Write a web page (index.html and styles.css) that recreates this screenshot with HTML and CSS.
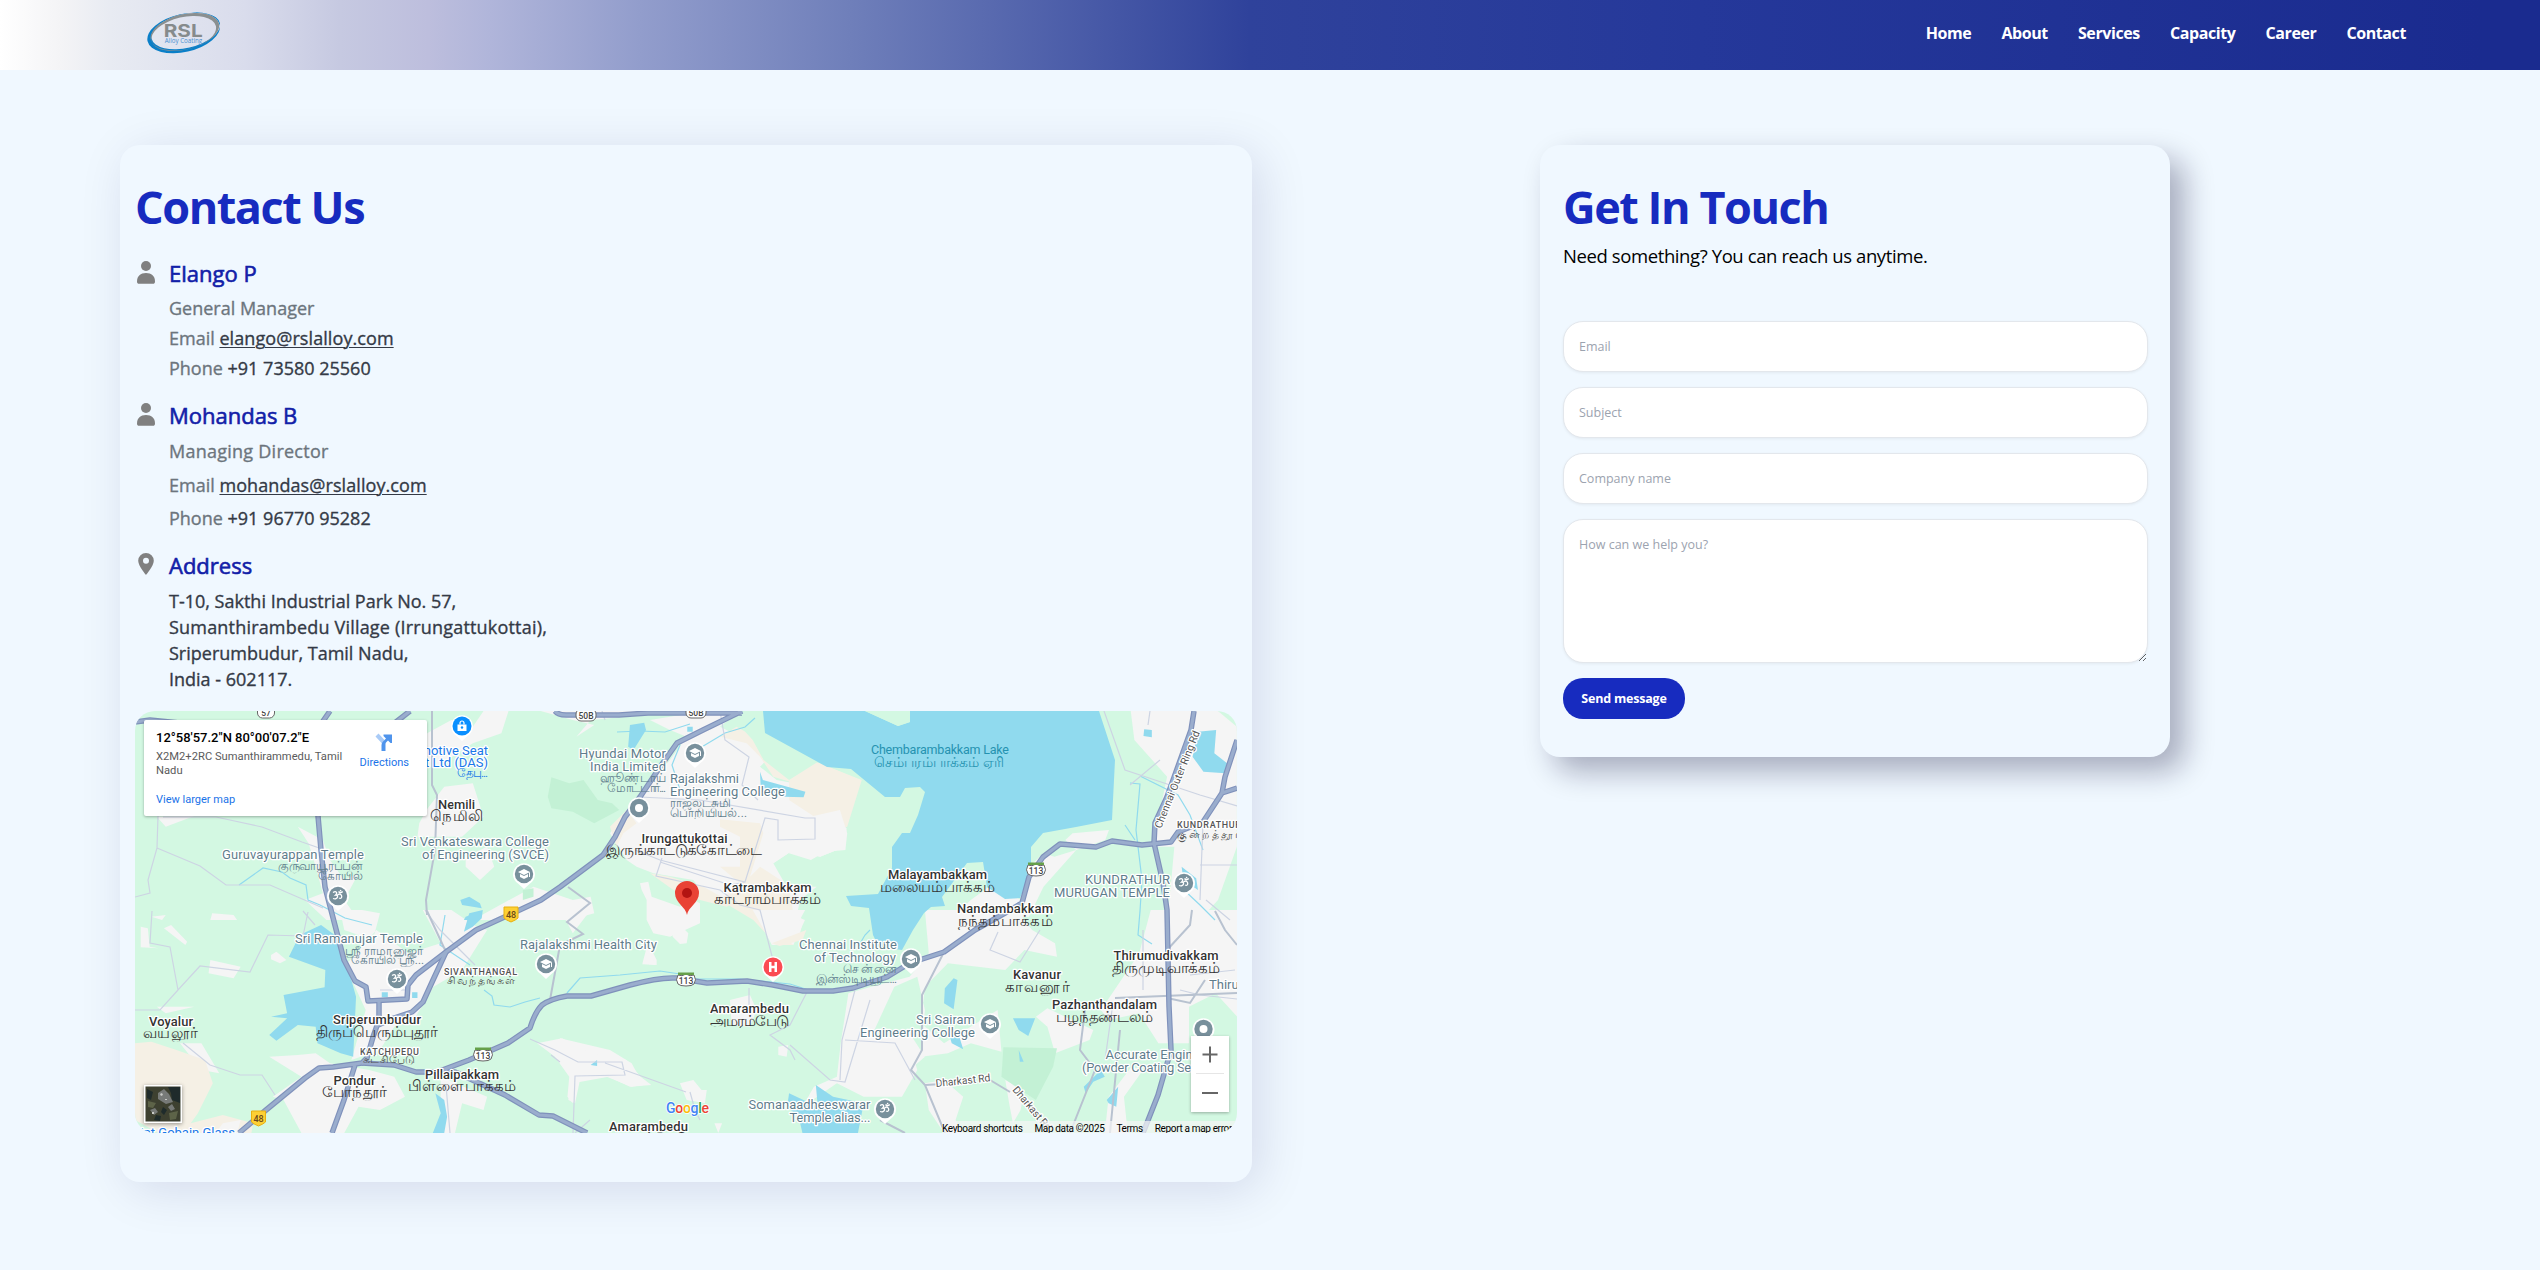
FILE: index.html
```html
<!DOCTYPE html>
<html lang="en">
<head>
<meta charset="utf-8">
<title>Contact - RSL Alloy Coating</title>
<link rel="stylesheet" href="styles.css">
</head>
<body>
<header class="navbar">
  <svg class="logo" width="80" height="46" viewBox="143 9 80 46" role="img" aria-label="RSL Alloy Coating">
    <g transform="rotate(-13 183.500 32.500)" fill-rule="evenodd">
      <path class="logo-blue" d="M146.500 33a37 19 0 1 0 74 0a37 19 0 1 0 -74 0zM151 31.500a35 17 0 1 0 70 0a35 17 0 1 0 -70 0z"/>
      <path class="logo-gray" d="M150 32a35 17.500 0 1 0 70 0a35 17.500 0 1 0 -70 0zM150.500 33.500a33 16.300 0 1 0 66 0a33 16.300 0 1 0 -66 0z"/>
    </g>
    <text class="logo-name" x="163.700" y="36.700" textLength="39" lengthAdjust="spacingAndGlyphs">RSL</text>
    <text class="logo-sub" x="164.700" y="42.500" textLength="37.500" lengthAdjust="spacingAndGlyphs">Alloy Coating</text>
  </svg>
  <nav class="menu">
    <a>Home</a><a>About</a><a>Services</a><a>Capacity</a><a>Career</a><a>Contact</a>
  </nav>
</header>
<main class="page">
  <section class="card contact">
    <h1 class="title">Contact Us</h1>
    <div class="entry">
      <svg class="icon" width="18" height="23" viewBox="0 0 18 23"><circle cx="9" cy="5" r="5"/><path d="M0 20.500C0 15 3.500 12 9 12s9 3 9 8.500c0 1.500-.8 2.300-2 2.300H2c-1.200 0-2-.8-2-2.300z"/></svg>
      <div class="details">
        <h2 class="name">Elango P</h2>
        <p class="line">General Manager</p>
        <p class="line">Email <a class="value link">elango@rslalloy.com</a></p>
        <p class="line">Phone <span class="value">+91 73580 25560</span></p>
      </div>
    </div>
    <div class="entry roomy">
      <svg class="icon" width="18" height="23" viewBox="0 0 18 23"><circle cx="9" cy="5" r="5"/><path d="M0 20.500C0 15 3.500 12 9 12s9 3 9 8.500c0 1.500-.8 2.300-2 2.300H2c-1.200 0-2-.8-2-2.300z"/></svg>
      <div class="details">
        <h2 class="name">Mohandas B</h2>
        <p class="line role">Managing Director</p>
        <p class="line">Email <a class="value link">mohandas@rslalloy.com</a></p>
        <p class="line">Phone <span class="value">+91 96770 95282</span></p>
      </div>
    </div>
    <div class="entry place">
      <svg class="icon" width="18" height="23" viewBox="0 0 18 23"><path fill-rule="evenodd" d="M9 0a7.800 7.800 0 0 1 7.800 7.800C16.800 13 9 22 9 22S1.200 13 1.200 7.800A7.800 7.800 0 0 1 9 0zm0 4.800a3 3 0 1 0 0 6 3 3 0 0 0 0-6z"/></svg>
      <div class="details">
        <h2 class="name">Address</h2>
        <p class="line value">T-10, Sakthi Industrial Park No. 57,<br><span class="wide">Sumanthirambedu Village (Irrungattukottai),</span><br>Sriperumbudur, Tamil Nadu,<br>India - 602117.</p>
      </div>
    </div>
    <div class="map">
      <svg class="map-art" width="1102" height="422" viewBox="135 711 1102 422">
        <defs>
          <g id="om"><path class="pin-rim" d="M0 15l-6-5.500A11 11 0 1 1 6 9.500z"/><circle r="9.200" class="pin-slate"/><path class="pin-line" d="M-5-3.500C-2-5.500 0-3.500-2.500-.8 1-1.500 0 4.500-5 2.500M-1-.5c2-2 3.500-2 4.500 0 .8 2-.5 3.500-2.500 2.500M.5-4.500c1 1.300 3 1.300 4.200 0"/><circle cx="2.600" cy="-5.500" r=".8" fill="#fff"/></g>
          <g id="grad"><path class="pin-rim" d="M0 15l-6-5.500A11 11 0 1 1 6 9.500z"/><circle r="9.200" class="pin-slate"/><path fill="#fff" d="M0-5L6-2 0 1-6-2zM-4 0L0 2 4 0V3L0 5-4 3zM5-1.500H6V3H5z"/></g>
          <g id="dot"><path class="pin-rim" d="M0 15l-6-5.500A11 11 0 1 1 6 9.500z"/><circle r="9.200" class="pin-slate"/><circle r="4" fill="#fff"/></g>
          <g id="sh3"><path class="shield" d="M-8-5q4 2 8-1 4 3 8 1 3 5 0 9-2 2-8 2t-8-2q-3-4 0-9z"/><path fill="#66a04a" d="M-8-7.500H8v2.500H-8z"/><text class="shield-no" y="3.500">113</text></g>
          <g id="sh48"><path class="shield-nh" d="M-7-7H7V4Q5 6 0 8-5 6-7 4z"/><text class="shield-no nh" y="4">48</text></g>
          <g id="sh50"><rect class="shield" x="-10" y="-6" width="20" height="12" rx="5"/><text class="shield-no" y="3.500">50B</text></g>
          <g id="sh57"><rect class="shield" x="-8.500" y="-6" width="17" height="12" rx="5"/><text class="shield-no" y="3.500">57</text></g>
          <g id="roads">
            <path d="M742 711L703 730 677 743 660 767 640 797 625 817 615 837 603 855 560 887 541 900 511 914 476 930 446 952 416 975 408 985 407 999 368 1001 366 987 355 981 344 960 331 910 325 887 321 850 318 816M318 816L310 740 330 711M410 711L396 722 380 745M555 711Q558 715 566 715H619L648 713H742M135 722L150 720 200 725"/>
            <path d="M446 952L433 980 423 1002 412 1012 394 1018 376 1026M379 1001V1020L373 1037 367 1058 362 1063 333 1067 319 1068 305 1078 266 1110 239 1133M355 1065L344 1100 332 1133M437 1072L455 1072 505 1095 539 1115 553 1116 587 1133"/>
            <path d="M362 1063L394 1065 416 1072H437L469 1060 508 1043 530 1028Q535 1012 542 1005 550 999 567 996H591L630 985Q660 977 676 978L707 983 747 981 773 985 803 991H833L853 988 887 977 910 963 944 952 975 930 1005 913 1022 903 1029 877 1043 857 1060 844 1096 847 1112 841 1142 845 1171 842 1178 832 1203 822 1222 793 1225 777 1237 740M1222 793L1237 788"/>
            <path d="M1194 711L1191 730 1167 797 1155 823 1154 843 1163 883 1167 910 1169 1006 1171 1050 1158 1095 1143 1133"/>
          </g>
        </defs>
        <rect x="135" y="711" width="1102" height="422" fill="#d3f8e2"/>
        <!-- built-up areas and bare land -->
        <g transform="translate(130 700) scale(.3571 .3333)">
          <path class="urban" d="M832 100L900 60 960 80 990 33H1060L1040 100 960 130 860 200H832zM830 330L880 260 960 250 990 350 930 410H805L810 370zM470 380L540 420 560 480 600 540 640 520 600 600 640 660H550L490 600 540 580 520 500 500 430zM940 470L1000 440 1020 500 980 540 940 500zM960 660L1130 560 1240 600 1290 590 1300 640 1230 660z"/>
          <path class="urban" d="M60 650L100 645 90 660zM230 640L290 645 300 660H225zM75 350L180 348 100 380z"/>
          <path class="urban" d="M1150 33L1240 60 1300 75 1250 110 1290 60 1568 33V33z"/>
          <path class="wood" d="M1180 232L1230 250 1270 240 1310 300 1350 310 1370 330 1300 370 1240 335 1180 325 1170 290z"/>
          <path class="wood" d="M1100 570L1130 565V590L1100 600z"/>
        </g>
        <g transform="translate(560 700) scale(.3333)">
          <path class="urban" d="M270 60L330 50 440 33H540L480 80 560 120 620 180 600 200 650 240 760 260 830 360 860 385 855 440 780 470 700 450 640 490 680 560 770 560 720 600 710 650 735 660 700 735 640 735 600 650 520 600 430 580 400 540 280 520 230 500 200 480 150 400 200 330 260 260 330 180 380 110 330 90z"/>
          <path class="sand" d="M530 80L600 120 630 150 700 220 740 200 780 190 900 240 860 380 780 340 740 260 640 230 600 170 560 130 480 110zM480 358L600 370 610 400 570 530 600 500 670 545 690 580 700 640 660 700 700 735 650 735 580 660 480 600 540 550 480 500 540 500 540 410 480 380zM200 330L230 370 190 400 170 440 150 380z"/>
          <path class="sand" d="M270 520L330 530 430 560 520 610 500 620 420 600 340 570z"/>
          <path class="urban" d="M620 400L740 360 850 380 855 440 780 470 700 450 640 490 620 470z"/>
          <path class="urban" d="M240 550L265 545 275 590 360 620 400 600 420 610 420 670 330 710 280 700 260 660 260 600 245 570zM340 700L370 685 385 700 380 730 360 732 338 710zM270 740L290 780 290 795 247 793z"/>
          <path class="urban" d="M510 900L570 885 590 930 570 980 515 975zM655 1040L685 1035 680 1070 655 1065zM0 1015L150 1050 215 1090 250 1155 215 1160 140 1130 60 1140 45 1210 25 1200 30 1130 0 1075zM360 1150L400 1140 437 1185 430 1205 380 1200z"/>
          <path class="urban" d="M600 640L700 640 730 660 720 700 640 690z"/>
        </g>
        <g transform="translate(680 700) scale(.3635 .3333)">
          <path class="sand" d="M300 140L360 180 500 240 460 380 400 400 370 350 300 300z"/>
          <path class="urban" d="M340 355L440 330 460 400 455 450 400 455 360 480 300 460z"/>
          <path fill="#d3f8e2" d="M150 60L228 33 235 100 380 185 300 240 230 180 200 120z"/>
          <path class="urban" d="M1240 33H1480L1532 80V440L1480 600 1430 660H1340L1350 560 1360 440 1300 440 1340 230 1250 120zM1080 400L1180 390 1170 420 1090 450 1060 420zM960 500L1000 460 1030 470 1090 450 1000 560 960 650 870 660H740L800 600 850 560 940 600z"/>
        </g>
        <g transform="translate(130 910) scale(.3571 .3333)">
          <path class="urban" d="M30 50L50 55 55 110 80 115 30 112zM95 55L115 45 160 95 155 105zM225 150L310 170 290 205 220 190zM395 135L410 125 438 150 420 160 395 148zM550 0L590 10 600 60 680 90 700 10 650 0zM820 0H900L970 50 1000 60 930 180 850 230 800 320 740 350 700 420 620 450 660 300 630 230 600 170 690 60 780 130 870 100z"/>
          <path class="urban" d="M390 440L470 435 520 430 560 460 670 480 740 500 770 560 700 600 640 590 600 669H480L430 570 400 560 480 500zM75 290L180 290 100 310zM140 400L200 400 250 490 200 480zM870 500L1000 560 990 600 930 580 910 669H870z"/>
          <path class="urban" d="M1140 400L1210 385 1290 430 1390 450 1430 500 1460 525 1400 530 1340 500 1240 520 1240 580 1225 560 1230 500 1190 440zM1220 0H1290L1240 70 1220 30zM1450 100L1470 165 1435 160z"/>
          <path class="sand" d="M14 400L60 395 130 420 210 450 232 520 190 610 170 640 260 615 345 640 340 669H80L14 630z"/>
          <path class="urban" d="M260 640L310 630 300 669H240z"/>
        </g>
        <g transform="translate(680 910) scale(.3827 .3333)">
          <path class="urban" d="M190 0H327L280 100 240 105 220 60zM640 0H880L920 60 980 100 985 140 900 120 850 180 700 160 640 230 630 340 690 400 830 300 840 425 760 400 700 430 630 440 640 300 620 200 560 230 500 380 600 400 620 480 580 560 480 560 410 520 320 590 350 530 410 500 420 400 440 250 500 230 600 200 650 130zM480 390L600 370 640 440 600 480zM640 520L690 510 740 560 720 630 740 669H690L650 600zM850 510L900 540 890 600 870 640 860 580z"/>
          <path class="urban" d="M930 320L960 295 1080 360 1070 390 980 430 960 350zM1100 300L1200 130 1230 0H1456V320L1400 250 1330 290 1330 400H1250L1200 310 1120 330zM1180 470L1210 480 1160 560 1170 669H1110L1120 560zM20 540L70 540 65 580 20 570zM90 640L110 640 100 669z"/>
          <path class="sand" d="M240 100L330 60 320 90 260 108z"/>
          <path class="wood" d="M845 412L985 415 975 470 930 570 890 540 840 500z"/>
        </g>
        <!-- water -->
        <path class="water" d="M763 711L765 733 827 767 851 769 885 797 900 797 905 788 920 787 925 792 918 815 910 833 902 833 892 847V868L878 894 846 896 851 906 869 908 873 935 879 947 902 950 913 930 924 913 931 907 945 906 942 897 967 863 983 862 987 887 1005 899 1020 898 1031 873V847L1043 833 1076 827 1112 820 1115 760 1099 711H910V722L898 726 865 711z"/>
        <path fill="#d3f8e2" d="M865 711H910V722L898 726z"/>
        <g transform="translate(130 910) scale(.3571 .3333)">
          <path class="water" d="M475 75L535 45 580 80 620 210 633 260 625 440 590 430 525 400 520 350 470 345 410 392 390 375 440 325 395 320 440 310 430 255 545 232 547 180 445 140zM935 65L950 10 988 0 985 25 960 50zM855 550L880 570 888 620 880 669H848L870 610zM705 247H722V262H705zM790 247H805V264H790zM1290 465L1308 450V468z"/>
        </g>
        <g transform="translate(130 700) scale(.3571 .3333)">
          <path class="water" d="M925 600L950 590 980 610 985 625 930 615zM940 650L985 632 980 660H935zM1400 75L1440 68 1445 90 1410 150 1395 140z"/>
        </g>
        <g transform="translate(680 700) scale(.3635 .3333)">
          <path class="water" d="M220 215L228 240 345 275 340 292 285 290 222 260zM1277 88L1298 90V112L1275 108zM1425 95L1475 90 1470 160 1505 190 1500 220 1440 215 1410 170zM1380 500L1420 535 1425 570 1385 540zM20 80H35V95H20z"/>
        </g>
        <g transform="translate(680 910) scale(.3827 .3333)">
          <path class="water" d="M715 205L725 210 715 298 690 280 692 235zM870 325L928 325 910 378 885 360zM700 360L730 380 740 418 710 400zM355 525L400 560 480 580 465 669H320L310 620 280 590 285 550 360 590zM885 420L898 455H888zM1100 480L1110 500 1080 515 1060 550 1055 530zM1145 530L1140 590 1120 580 1115 570z"/>
        </g>
        <!-- streams -->
        <path class="stream" d="M239 885L263 868 282 872 290 878 306 885 308 900 320 905 345 918 372 925M484 990L492 996 494 1005 510 1007 525 1002 540 998M567 993L580 978 620 975 660 971 680 974 690 979 740 979 790 984 815 992 870 984M617 732L640 731 665 732 690 724M700 748L725 733 745 727 755 718M1130 783L1140 784 1136 830 1142 880 1140 911 1138 935 1152 944M1140 776L1178 795 1190 815 1203 850M1125 825L1135 840M858 947L865 935 870 930M1184 890L1200 905 1215 920M445 915L440 945 470 965M680 745L672 765 680 790"/>
        <!-- local streets -->
        <g class="street">
          <path d="M158 816L157 848 148 880 150 893 135 897M157 848L200 866 226 885 270 885 323 908M163 817L216 817 262 827 302 842 325 850M152 911L150 943 170 947 178 990 200 966 250 972 268 935 303 936 308 912M135 1010L160 1010 178 990M183 1043L210 1065 240 1075 262 1075 275 1095M303 911L315 925M425 910L440 930 475 965M380 990L408 990M530 1039L555 1050 578 1062 622 1062 625 1075 575 1076 573 1133M551 1055L560 1062M686 1092L605 1063M690 1092L695 1110 700 1120M602 711L605 720M720 711L725 740 749 757 742 785 758 800M640 797L700 800 805 818 815 818V839L778 840V820L765 818 745 882 660 860 635 850M662 858L656 876 720 890 740 905 760 910 773 960 776 975M660 862L730 885 745 882M749 988V1005M807 992L790 1025 770 1035 790 1050 795 1060M790 1045L830 1080 845 1082 870 1000M845 1040L895 1043 915 1080M1160 760L1130 785M1104 711L1125 770 1155 780 1200 795 1237 806M1150 711L1148 725M998 932L990 950 1020 962 1040 930M1112 1010L1105 1060M1200 865H1237M1203 822L1200 900M1206 900L1230 920M1143 930V990M1180 990L1200 995 1237 999M1190 975L1235 970M446 1085L450 1133M855 990L842 1040 840 1080M575 1133L590 1120"/>
          <path class="collector" d="M432 711V785L437 795 435 850 426 900 427 915M427 911L446 952M568 887L590 903 567 922 583 934 560 945 550 1000M944 952L922 995V1050L911 1070 925 1085 945 1133M925 1085L960 1083M990 1080L1010 1092M1085 1010L1080 1050 1095 1070 1070 1133M1167 998L1190 1003 1205 980M1167 950L1190 925 1192 910M1120 1030L1110 1133M1215 911L1225 930 1237 945M1115 998L1237 993M880 1120L905 1133"/>
        </g>
        <!-- highways: casing, then fill -->
        <use href="#roads" class="highway casing"/>
        <use href="#roads" class="highway"/>
        <!-- route shields -->
        <use href="#sh48" x="511" y="914"/><use href="#sh48" x="258.500" y="1118"/>
        <use href="#sh3" x="483" y="1055"/><use href="#sh3" x="686" y="980"/><use href="#sh3" x="1036" y="870"/>
        <use href="#sh50" x="586" y="715"/><use href="#sh50" x="696" y="712"/><use href="#sh57" x="266" y="712"/>
        <!-- labels -->
        <g class="poi end">
          <text x="364" y="859" textLength="142">Guruvayurappan Temple</text><text class="ta" x="363" y="869.500" textLength="85">குருவாயூரப்பன்</text><text class="ta" x="363" y="879.500" textLength="45">கோயில்</text>
          <text x="549" y="845.500" textLength="148">Sri Venkateswara College</text><text x="549" y="859" textLength="127">of Engineering (SVCE)</text>
          <text x="666" y="758" textLength="87">Hyundai Motor</text><text x="666" y="771" textLength="76">India Limited</text><text class="ta" x="666" y="782" textLength="66">ஹூண்டாய்</text><text class="ta" x="666" y="792" textLength="59">மோட்டார்...</text>
          <text x="657" y="949" textLength="137">Rajalakshmi Health City</text>
          <text x="423" y="943" textLength="128">Sri Ramanujar Temple</text><text class="ta" x="423" y="954.500" textLength="78">ஸ்ரீ ராமானுஜர்</text><text class="ta" x="424" y="964" textLength="73">கோயில் ஸ்ரீ...</text>
          <text x="1170" y="884" textLength="85">KUNDRATHUR</text><text x="1170" y="897" textLength="116">MURUGAN TEMPLE</text>
          <text x="897" y="949" textLength="98">Chennai Institute</text><text x="896" y="962" textLength="82">of Technology</text><text class="ta" x="897" y="973" textLength="54">சென்னை</text><text class="ta" x="897" y="983" textLength="81">இன்ஸ்டிடியூட்...</text>
          <text x="975" y="1024" textLength="59">Sri Sairam</text><text x="975" y="1037" textLength="115">Engineering College</text>
          <text x="870.500" y="1109" textLength="122">Somanaadheeswarar</text><text x="870.500" y="1122" textLength="81">Temple alias...</text>
        </g>
        <g class="poi">
          <text x="670" y="783" textLength="69">Rajalakshmi</text><text x="670" y="796" textLength="115">Engineering College</text><text class="ta" x="670" y="807" textLength="61">ராஜலட்சுமி</text><text class="ta" x="670" y="817" textLength="77">பொறியியல்...</text>
          <text x="1209" y="989">Thirumudi</text>
          <text x="1105.500" y="1059">Accurate Engineering</text><text x="1082" y="1072" textLength="146">(Powder Coating Services)</text>
        </g>
        <g class="poi shop end">
          <text x="488" y="754.500">Automotive Seat</text><text x="488" y="767">Pvt Ltd (DAS)</text><text class="ta" x="488" y="777" textLength="31">தேபு...</text>
          <text x="235" y="1136.500">Saint Gobain Glass</text>
        </g>
        <!-- pins -->
        <use href="#om" x="338" y="896"/><use href="#om" x="397" y="979"/><use href="#om" x="1184" y="883"/><use href="#om" x="885" y="1109"/>
        <use href="#grad" x="524" y="874"/><use href="#grad" x="695" y="753"/><use href="#grad" x="546" y="964"/><use href="#grad" x="911" y="959"/><use href="#grad" x="990" y="1024"/>
        <use href="#dot" x="639" y="808"/><use href="#dot" x="1203.500" y="1029"/>
        <g transform="translate(773 967)"><path class="pin-rim" d="M0 15l-6-5.500A11 11 0 1 1 6 9.500z"/><circle r="9.500" fill="#fb4b53"/><path fill="#fff" d="M-4-5h2.500v3.800h3V-5H4V5H1.500V1.200h-3V5H-4z"/></g>
        <g transform="translate(462 726)"><path class="pin-rim" d="M0 15l-6-5.500A11 11 0 1 1 6 9.500z"/><circle r="9.500" fill="#0a8fff"/><path fill="#fff" d="M-4.500-1.500h9V5h-9z"/><path fill="none" stroke="#fff" stroke-width="1.200" d="M-2-1.500V-3a2 2 0 0 1 4 0v1.500"/><circle cy="1.500" r="1.200" fill="#0a8fff"/></g>
        <path fill="#e94235" d="M687 915c-1-8-12-12-12-22a12 12 0 1 1 24 0c0 10-11 14-12 22z"/><circle cx="687" cy="893" r="5" fill="#b31412"/>
        <g class="town">
          <text x="456.500" y="809" textLength="37">Nemili</text><text x="456.500" y="821" textLength="53">நெமிலி</text>
          <text x="684.500" y="843" textLength="86">Irungattukottai</text><text x="684" y="855" textLength="156">இருங்காட்டுக்கோட்டை</text>
          <text x="767.500" y="892" textLength="88">Katrambakkam</text><text x="767.500" y="904" textLength="107">காட்ராம்பாக்கம்</text>
          <text x="749.500" y="1013" textLength="79">Amarambedu</text><text x="749.500" y="1026" textLength="79">அமரம்பேடு</text>
          <text x="648.500" y="1130.500" textLength="79">Amarambedu</text><text x="648.500" y="1143" textLength="79">அமரம்பேடு</text>
          <text x="171" y="1025.500" textLength="44">Voyalur</text><text x="170" y="1038" textLength="55">வயலூர்</text>
          <text x="377" y="1024" textLength="88">Sriperumbudur</text><text x="377" y="1037" textLength="122">திருப்பெரும்புதூர்</text>
          <text x="354.500" y="1084.500" textLength="42">Pondur</text><text x="354.500" y="1097" textLength="65">போந்தூர்</text>
          <text x="462" y="1079" textLength="74">Pillaipakkam</text><text x="462" y="1091" textLength="108">பிள்ளைபாக்கம்</text>
          <text x="937.500" y="879" textLength="99">Malayambakkam</text><text x="937.500" y="891.500" textLength="115">மலையம்பாக்கம்</text>
          <text x="1005" y="913" textLength="96">Nandambakkam</text><text x="1005" y="925.500" textLength="95">நந்தம்பாக்கம்</text>
          <text x="1037" y="979" textLength="48">Kavanur</text><text x="1037" y="992" textLength="65">காவனூர்</text>
          <text x="1166" y="960" textLength="105">Thirumudivakkam</text><text x="1166" y="972.500" textLength="108">திருமுடிவாக்கம்</text>
          <text x="1104.500" y="1009" textLength="105">Pazhanthandalam</text><text x="1104.500" y="1022" textLength="97">பழந்தண்டலம்</text>
        </g>
        <g class="town hamlet">
          <text x="480.500" y="975" textLength="73">SIVANTHANGAL</text><text x="481" y="983.500" textLength="68">சிவந்தங்கள்</text>
          <text x="389.500" y="1054.500" textLength="59">KATCHIPEDU</text><text x="389" y="1063" textLength="52">கட்சிபேடு</text>
          <text x="1209" y="828" textLength="64">KUNDRATHUR</text><text x="1209" y="837.500" textLength="64">குன்றத்தூர்</text>
        </g>
        <g class="lake"><text x="940" y="754" textLength="138">Chembarambakkam Lake</text><text x="939" y="766.500" textLength="130">செம்பரம்பாக்கம் ஏரி</text></g>
        <g class="road-name">
          <text transform="translate(1161 829) rotate(-68)" textLength="104">Chennai Outer Ring Rd</text>
          <text transform="translate(936 1087) rotate(-6)" textLength="55">Dharkast Rd</text>
          <text transform="translate(1012 1090) rotate(50)" textLength="54">Dharkast Rd</text>
        </g>
        <text class="google" x="666" y="1113" textLength="43"><tspan fill="#4285f4">G</tspan><tspan fill="#ea4335">o</tspan><tspan fill="#fbbc05">o</tspan><tspan fill="#4285f4">g</tspan><tspan fill="#34a853">l</tspan><tspan fill="#ea4335">e</tspan></text>
      </svg>
      <div class="place-card">
        <div class="place-text">
          <p class="coords">12°58'57.2"N 80°00'07.2"E</p>
          <p class="plus-code">X2M2+2RC Sumanthirammedu, Tamil<br>Nadu</p>
          <a class="larger">View larger map</a>
        </div>
        <a class="directions">
          <svg width="18" height="18" viewBox="0 0 18 18"><path fill="#a9cbf7" d="M.5 3.500L3.500.5 9.500 7 7.500 11z"/><path fill="#4f94ec" d="M6.500 18v-6Q6.500 10 8 8.500L11 5.500 8.500 3V1.500H17V10h-1.500L13 7.500 11 9.500Q10.500 10 10.500 11v7z"/></svg>
          Directions
        </a>
      </div>
      <svg class="satellite" width="38" height="38" viewBox="0 0 38 38"><rect width="38" height="38" fill="#fff"/><rect x="1.500" y="1.500" width="35" height="35" fill="#3d4030"/><path fill="#777a78" d="M14 8l6-4 5 5 4 8-7 2-8-5zM6 25l5-2 3 4-4 3zM24 22l4-3 3 5-4 2z"/><path fill="#1f2b2b" d="M24 2h12v16l-8-3-1-7zM3 4l6 3-2 8-4-2zM12 30l5 1-1 5-6-1zM19 22l4 3-3 5-3-3z"/><path fill="#5d6348" d="M4 16l8 2-3 5-5-1zM25 28l9-2-2 8-6 1z"/><path fill="#c9cbc7" d="M16 9l2-1 1 2-2 1zM8 27l2 0 0 2-2 0zM21 14l2 0 0 1-2 0z"/></svg>
      <div class="zoom"><svg width="38" height="76" viewBox="0 0 38 76"><path fill="#666" d="M11.500 17.500h6.500v-7h2v7h6.500v2H20v7h-2v-7h-6.500zM11 56h16v2H11z"/><path fill="#e6e6e6" d="M5 37h28v1H5z"/></svg></div>
      <div class="credits"><span>Keyboard shortcuts</span><span>Map data ©2025</span><span>Terms</span><span>Report a map error</span></div>
    </div>
  </section>
  <section class="card touch">
    <h1 class="title">Get In Touch</h1>
    <p class="lead">Need something? You can reach us anytime.</p>
    <form class="form">
      <input class="field" type="text" placeholder="Email">
      <input class="field" type="text" placeholder="Subject">
      <input class="field" type="text" placeholder="Company name">
      <textarea class="field message" placeholder="How can we help you?"></textarea>
      <button class="send" type="button">Send message</button>
    </form>
  </section>
</main>
</body>
</html>
```
FILE: styles.css
```css
* { box-sizing: border-box; }
body {
  margin: 0;
  min-height: 1270px;
  background: #f0f8ff;
  font-family: "Open Sans", "Noto Sans", sans-serif;
  color: #000;
}
h1, h2, p { margin: 0; }

.navbar {
  display: flex;
  justify-content: space-between;
  height: 70px;
  padding: 9px 134px 0 143px;
  background: linear-gradient(90deg, #fff 0, #f4f4f6 60px, #e8ebf2 110px, #d9dcec 245px, #c6c9e1 340px, #bdbedd 428px, #b0b5da 490px, #929dcc 640px, #6f7fba 850px, #2f429b 1250px, #25389a 1700px, #1a2b8f 2480px);
}
.logo-blue { fill: #0a7fc8; }
.logo-gray { fill: #8a8f90; }
.logo-name { font: 700 17.500px Inter, sans-serif; fill: #868b8c; }
.logo-sub { font: 500 6.200px "Open Sans", sans-serif; fill: #4a8fd0; }
.menu {
  display: flex;
  gap: 30px;
  font-size: 16px;
  font-weight: 700;
  letter-spacing: -.400px;
  line-height: 48px;
  color: #fff;
}

.page {
  display: flex;
  align-items: flex-start;
  gap: 288px;
  padding: 75px 120px 0;
}
.card { border-radius: 20px; background: #f0f8ff; }
.contact {
  width: 1132px;
  height: 1037px;
  padding: 29px 15px 0;
  box-shadow: 8px 8px 50px rgba(10, 10, 90, .12);
}
.title {
  font-size: 45px;
  line-height: 65px;
  font-weight: 700;
  letter-spacing: -1.450px;
  color: #172bbf;
}
.entry {
  display: grid;
  grid-template-columns: 32px 1fr;
  margin: 19px 0 0 2px;
}
.entry.roomy { margin-top: 17px; }
.entry.place { margin-top: 14.500px; }
.icon { margin-top: 3px; fill: #808080; }
.name {
  margin-bottom: 5px;
  font-size: 22px;
  line-height: 30px;
  font-weight: 400;
  -webkit-text-stroke: .600px;
  color: #1220a8;
}
.line {
  font-size: 18px;
  line-height: 30px;
  -webkit-text-stroke: .350px;
  color: #6c757d;
}
.role { letter-spacing: .250px; }
.roomy .line { line-height: 33.500px; }
.place .line { line-height: 26px; margin-top: 8px; }
.value, .line.value { color: #343a46; }
.wide { letter-spacing: .190px; }
.link { text-decoration: underline 1px; text-underline-offset: 2px; letter-spacing: .080px; }

.map {
  position: relative;
  height: 422px;
  margin-top: 19px;
  overflow: hidden;
  border-radius: 20px;
  font-family: Roboto, sans-serif;
}
.map-art { display: block; }
.urban { fill: #f5f5f5; }
.sand { fill: #f5f0e5; }
.wood { fill: #c3f1d5; }
.water { fill: #90daee; }
.stream { fill: none; stroke: #90daee; stroke-width: 1.200; }
.street path { fill: none; stroke: #cdd4e3; stroke-width: 1.200; }
.street .collector { stroke: #b8c2d0; stroke-width: 2; }
.highway { fill: none; stroke: #9aadcd; stroke-width: 3.200; stroke-linejoin: round; }
.casing { stroke: #7f91bb; stroke-width: 5.500; }
.pin-rim { fill: #fff; }
.pin-slate { fill: #78909c; }
.pin-line { fill: none; stroke: #fff; stroke-width: 1.300; }
.shield { fill: #fff; stroke: #666; stroke-width: 1; }
.shield-nh { fill: #fdd034; stroke: #e8b010; stroke-width: 1; }
.shield-no { font: 500 8.500px Roboto, sans-serif; fill: #444; text-anchor: middle; }
.shield-no.nh { font-size: 9px; fill: #6b4a1a; }
.poi text, .town text, .road-name text {
  stroke: #fff;
  stroke-width: 2.500px;
  stroke-linejoin: round;
  paint-order: stroke;
}
.poi text { font-size: 13px; fill: #5f7d8c; }
.poi .ta { font-size: 11.500px; stroke: none; }
.poi.shop text { fill: #1a78e8; }
.end text { text-anchor: end; }
.town text { font-size: 13px; font-weight: 500; fill: #333; text-anchor: middle; }
.town text:nth-child(even) { font-size: 15px; stroke: none; }
.town.hamlet text { font-size: 9px; fill: #555; }
.town.hamlet text:nth-child(even) { font-size: 11px; }
.lake text { font-size: 12.500px; fill: #2592b0; text-anchor: middle; }
.lake text:nth-child(even) { font-size: 13.600px; }
.road-name text { font-size: 10.500px; fill: #555; }
.google { font: 500 14px Roboto, sans-serif; stroke: #fff; stroke-width: 1.500px; paint-order: stroke; }

.place-card {
  position: absolute;
  left: 9px;
  top: 9px;
  display: flex;
  justify-content: space-between;
  width: 283px;
  height: 96px;
  padding: 9px 18px 0 12px;
  border-radius: 2px;
  background: #fff;
  box-shadow: 0 1px 3px rgba(0, 0, 0, .3);
}
.coords { font-size: 13px; line-height: 18px; font-weight: 500; }
.plus-code { margin-top: 3px; font-size: 11.200px; line-height: 14px; color: #5b5b5b; white-space: nowrap; }
.larger { display: block; margin-top: 15px; font-size: 11px; line-height: 14px; color: #1a73e8; }
.directions {
  display: flex;
  flex-direction: column;
  align-items: center;
  padding-top: 4px;
  font-size: 11px;
  line-height: 14px;
  color: #1a73e8;
}
.directions svg { margin-bottom: 5px; }
.satellite { position: absolute; left: 9px; bottom: 10px; box-shadow: 0 1px 4px rgba(0, 0, 0, .4); }
.zoom {
  position: absolute;
  right: 8px;
  bottom: 21px;
  width: 38px;
  height: 76px;
  background: #fff;
  box-shadow: 0 1px 3px rgba(0, 0, 0, .3);
}
.credits {
  position: absolute;
  left: 807px;
  right: 0;
  bottom: 0;
  display: flex;
  gap: 12px;
  height: 12px;
  white-space: nowrap;
  font-size: 10px;
  letter-spacing: -.350px;
  line-height: 16px;
  background: rgba(245, 245, 245, .7);
}

.touch {
  width: 630px;
  height: 612px;
  padding: 29px 23px 0;
  box-shadow: 14px 14px 30px rgba(10, 10, 50, .32);
}
.lead { font-size: 18.500px; letter-spacing: -.400px; line-height: 34px; }
.form {
  display: flex;
  flex-direction: column;
  align-items: flex-start;
  gap: 15px;
  margin-top: 48px;
}
.field {
  display: block;
  width: 585px;
  height: 51px;
  padding: 0 15px 1px;
  border: 1px solid #e3e7ec;
  border-radius: 20px;
  outline: 0;
  background: #fff;
  font: 400 12.500px "Open Sans", sans-serif;
  box-shadow: 0 1px 3px rgba(0, 0, 0, .06);
}
.field::placeholder { color: #9ca3af; }
.message { height: 144px; padding: 16px 15px; }
.send {
  width: 122px;
  height: 41px;
  padding: 0;
  border: 0;
  border-radius: 20px;
  background: #172bbf;
  color: #fff;
  font: 700 12.500px "Open Sans", sans-serif;
  letter-spacing: -.200px;
}
```
